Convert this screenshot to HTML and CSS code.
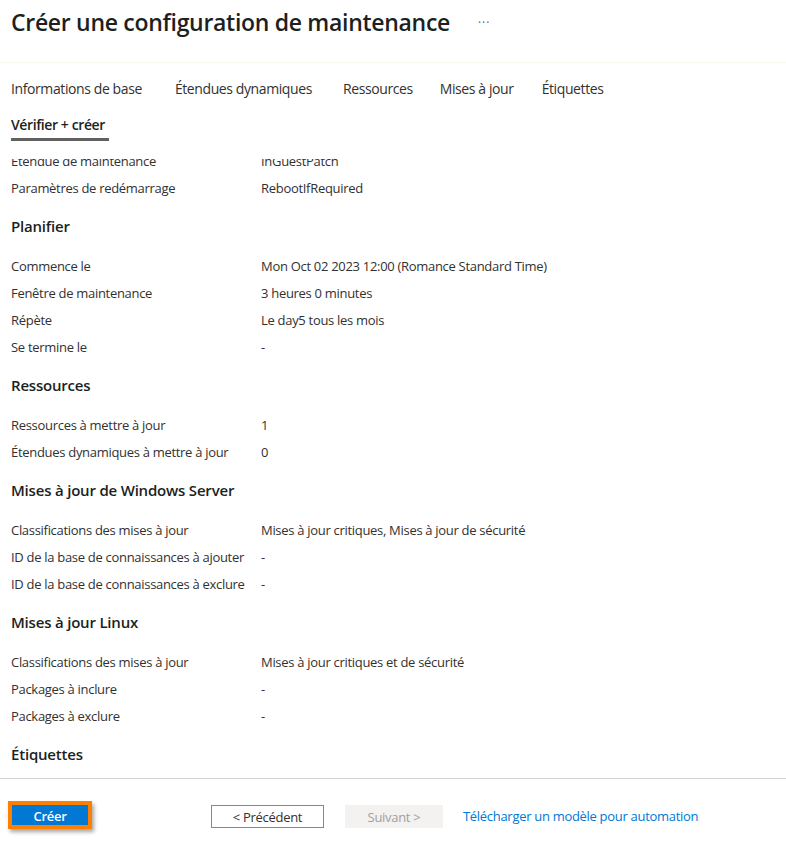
FILE: index.html
```html
<!DOCTYPE html>
<html lang="fr">
<head>
<meta charset="UTF-8">
<title>Créer une configuration de maintenance</title>
<meta name="viewport" content="width=device-width, initial-scale=1.0">
<link rel="stylesheet" href="styles.css">
</head>
<body>

<div class="top">
  <h1>Créer une configuration de maintenance</h1>
  <span class="more">···</span>
</div>

<div class="tabs">
  <span class="tab">Informations de base</span>
  <span class="tab">Étendues dynamiques</span>
  <span class="tab">Ressources</span>
  <span class="tab">Mises à jour</span>
  <span class="tab">Étiquettes</span>
  <span class="tab active">Vérifier + créer</span>
</div>

<div class="review">
  <div class="list">
    <div class="row"><span class="label">Étendue de maintenance</span><span>InGuestPatch</span></div>
    <div class="row"><span class="label">Paramètres de redémarrage</span><span>RebootIfRequired</span></div>

    <h2>Planifier</h2>
    <div class="row"><span class="label">Commence le</span><span>Mon Oct 02 2023 12:00 (Romance Standard Time)</span></div>
    <div class="row"><span class="label">Fenêtre de maintenance</span><span>3 heures 0 minutes</span></div>
    <div class="row"><span class="label">Répète</span><span>Le day5 tous les mois</span></div>
    <div class="row"><span class="label">Se termine le</span><span>-</span></div>

    <h2>Ressources</h2>
    <div class="row"><span class="label">Ressources à mettre à jour</span><span>1</span></div>
    <div class="row"><span class="label">Étendues dynamiques à mettre à jour</span><span>0</span></div>

    <h2>Mises à jour de Windows Server</h2>
    <div class="row"><span class="label">Classifications des mises à jour</span><span>Mises à jour critiques, Mises à jour de sécurité</span></div>
    <div class="row"><span class="label">ID de la base de connaissances à ajouter</span><span>-</span></div>
    <div class="row"><span class="label">ID de la base de connaissances à exclure</span><span>-</span></div>

    <h2>Mises à jour Linux</h2>
    <div class="row"><span class="label">Classifications des mises à jour</span><span>Mises à jour critiques et de sécurité</span></div>
    <div class="row"><span class="label">Packages à inclure</span><span>-</span></div>
    <div class="row"><span class="label">Packages à exclure</span><span>-</span></div>

    <h2>Étiquettes</h2>
  </div>
</div>

<div class="footer">
  <button class="btn primary">Créer</button>
  <button class="btn prev">&lt; Précédent</button>
  <button class="btn next" disabled>Suivant &gt;</button>
  <a class="link" href="#">Télécharger un modèle pour automation</a>
</div>

</body>
</html>
```

FILE: styles.css
```css
:root{
  --text:#323130;
  --dark:#201f1e;
  --blue:#0078d4;
}
*{box-sizing:border-box}
body{
  margin:0;
  font-family:"Open Sans","Noto Sans",Arial,sans-serif;
  font-size:13px;
  letter-spacing:-0.3px;
  color:var(--text);
  background:#fff;
  height:844px;
  overflow:hidden;
  display:flex;
  flex-direction:column;
}

/* TITLE */
.top{
  display:flex;
  align-items:center;
  height:63px;
  padding:0 11px 18px;
  border-bottom:1px solid #f6fbee;
}
.top h1{
  margin:0;
  font-size:23px;
  font-weight:600;
  letter-spacing:-0.3px;
  color:var(--dark);
}
.more{
  margin-left:28px;
  font-size:12px;
  color:#605e5c;
  letter-spacing:1px;
}

/* TABS */
.tabs{
  display:flex;
  flex-wrap:wrap;
  column-gap:31px;
  max-width:680px;
  padding:8px 11px 0;
}
.tab{
  height:36px;
  line-height:36px;
  font-size:14px;
  letter-spacing:-0.4px;
  color:var(--text);
}
.tab:nth-child(2){margin-left:2px}
.tab:nth-child(4){margin-left:-4px}
.tab:nth-child(5){margin-left:-3px}
.tab.active{
  font-weight:600;
  color:var(--dark);
  height:34px;
  line-height:36px;
  padding-right:4px;
  border-bottom:3px solid #616161;
}

/* REVIEW LIST */
.review{
  flex:1;
  overflow:hidden;
  margin-top:18px;
  padding:0 11px;
}
.list{
  margin-top:-12px;
}
.row{
  display:flex;
  height:27px;
  align-items:center;
}
.label{
  width:250px;
  flex-shrink:0;
}
.review h2{
  margin:0;
  height:51px;
  line-height:51px;
  font-size:15px;
  font-weight:600;
  letter-spacing:-0.2px;
  color:var(--dark);
}

/* FOOTER */
.footer{
  display:flex;
  align-items:flex-start;
  height:66px;
  flex-shrink:0;
  padding:22px 8px 0;
  border-top:1px solid #d4d4d4;
}
.btn{
  font-family:inherit;
  font-size:13px;
  letter-spacing:-0.3px;
  height:23px;
  padding:0;
}
.primary{
  width:84px;
  height:28px;
  padding-top:2px;
  border:4px solid #ff7f00;
  background:var(--blue);
  color:#fff;
  font-weight:600;
  box-shadow:2px 3px 4px rgba(0,0,0,.35);
  margin-right:119px;
}
.prev{
  width:113px;
  margin-top:4px;
  background:#fff;
  border:1px solid #8a8886;
  color:var(--text);
  margin-right:21px;
}
.next{
  width:98px;
  margin-top:4px;
  background:#f3f2f1;
  border:none;
  color:#a19f9d;
  margin-right:20px;
}
.link{
  color:var(--blue);
  text-decoration:none;
  margin-top:6px;
}
```
